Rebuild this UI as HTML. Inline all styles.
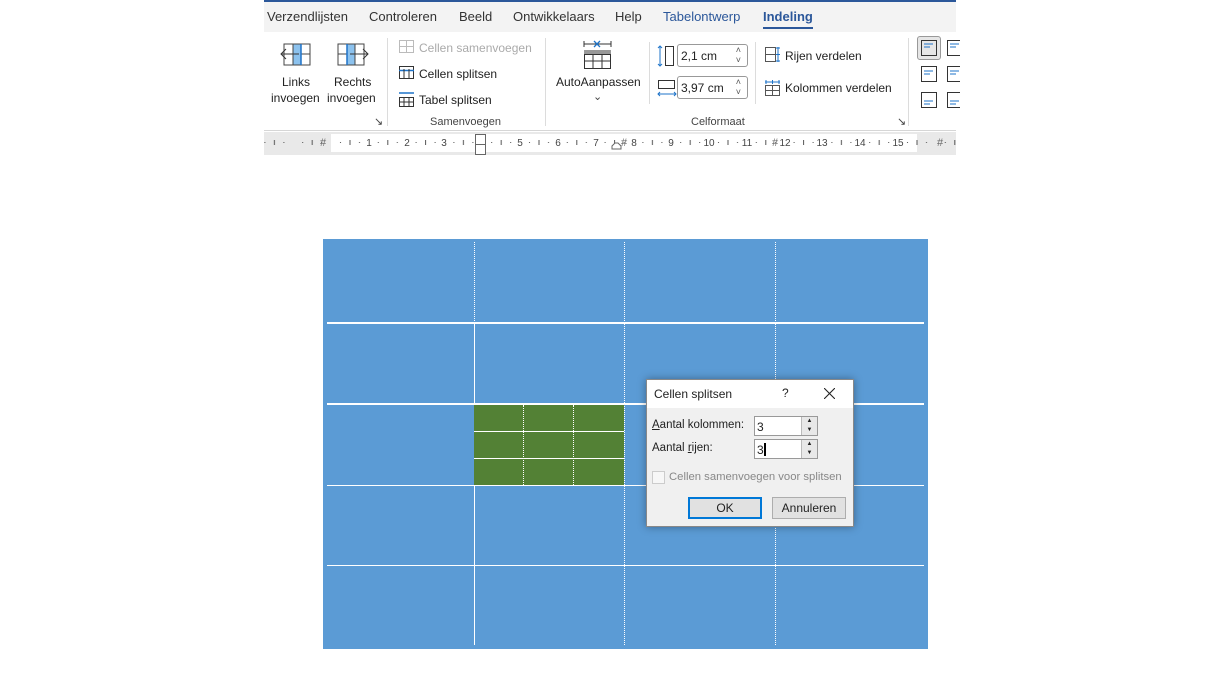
<!DOCTYPE html>
<html><head><meta charset="utf-8"><style>
*{margin:0;padding:0;box-sizing:border-box}
body{width:1220px;height:686px;background:#fff;position:relative;overflow:hidden;font-family:"Liberation Sans",sans-serif;color:#222}
.a{position:absolute;white-space:nowrap}
.t{font-size:13px;top:9px;color:#333}
.r{font-size:12px;color:#222}
.g{font-size:11px;color:#444}
.sep{position:absolute;width:1px;background:#dcdcdc}
.hl{position:absolute;background:#fff}
.vd{position:absolute;width:0;border-left:1px dotted #fff}
</style></head><body>
<!-- tab bar -->
<div class="a" style="left:264px;top:0;width:692px;height:2px;background:#2b579a"></div>
<div class="a" style="left:264px;top:2px;width:692px;height:30px;background:#f3f3f3"></div>
<div class="a t" style="left:267px">Verzendlijsten</div>
<div class="a t" style="left:369px">Controleren</div>
<div class="a t" style="left:459px">Beeld</div>
<div class="a t" style="left:513px">Ontwikkelaars</div>
<div class="a t" style="left:615px">Help</div>
<div class="a t" style="left:663px;color:#2b579a">Tabelontwerp</div>
<div class="a t" style="left:763px;color:#2b579a;font-weight:bold">Indeling</div>
<div class="a" style="left:763px;top:27px;width:50px;height:2px;background:#2b579a"></div>
<!-- ribbon -->
<div class="a" style="left:264px;top:32px;width:692px;height:99px;background:#fff;border-bottom:1px solid #d6d6d6"></div>
<svg class="a" style="left:280px;top:43px" width="32" height="24"><rect x="4" y="1" width="26" height="21" fill="#fff" stroke="#444"/><rect x="13" y="1" width="8" height="21" fill="#8cc2ee" stroke="#444"/><line x1="21" y1="11" x2="30" y2="11" stroke="#444"/><line x1="1" y1="11" x2="19" y2="11" stroke="#333"/><polyline points="6,6 1,11 6,16" fill="none" stroke="#333"/><line x1="21" y1="1" x2="21" y2="22" stroke="#1e73c8" stroke-width="1.5"/></svg>
<svg class="a" style="left:337px;top:43px" width="32" height="24"><rect x="1" y="1" width="26" height="21" fill="#fff" stroke="#444"/><rect x="10" y="1" width="8" height="21" fill="#8cc2ee" stroke="#444"/><line x1="1" y1="11" x2="10" y2="11" stroke="#444"/><line x1="13" y1="11" x2="31" y2="11" stroke="#333"/><polyline points="26,6 31,11 26,16" fill="none" stroke="#333"/><line x1="10" y1="1" x2="10" y2="22" stroke="#1e73c8" stroke-width="1.5"/></svg>
<div class="a r" style="left:282px;top:75px">Links</div>
<div class="a r" style="left:271px;top:91px">invoegen</div>
<div class="a r" style="left:334px;top:75px">Rechts</div>
<div class="a r" style="left:327px;top:91px">invoegen</div>
<div class="a g" style="left:374px;top:115px">↘</div>
<div class="sep" style="left:387px;top:38px;height:88px"></div>
<svg class="a" style="left:399px;top:40px" width="16" height="14"><rect x=".5" y=".5" width="14" height="12" fill="none" stroke="#bbb"/><line x1="0" y1="6.5" x2="15" y2="6.5" stroke="#bbb"/><line x1="7.5" y1="0" x2="7.5" y2="13" stroke="#bbb"/></svg>
<div class="a r" style="left:419px;top:41px;color:#aaa">Cellen samenvoegen</div>
<svg class="a" style="left:399px;top:66px" width="16" height="14"><rect x=".5" y=".5" width="14" height="12" fill="none" stroke="#333"/><line x1="0" y1="4.5" x2="15" y2="4.5" stroke="#1e73c8" stroke-width="1.5"/><line x1="5" y1="3" x2="5" y2="13" stroke="#333"/><line x1="10" y1="3" x2="10" y2="13" stroke="#333"/></svg>
<div class="a r" style="left:419px;top:67px">Cellen splitsen</div>
<svg class="a" style="left:399px;top:92px" width="16" height="15"><line x1="0" y1="1" x2="15" y2="1" stroke="#1e73c8" stroke-width="1.5"/><rect x=".5" y="5.5" width="14" height="9" fill="none" stroke="#333"/><line x1="0" y1="10" x2="15" y2="10" stroke="#333"/><line x1="5" y1="5" x2="5" y2="15" stroke="#333"/><line x1="10" y1="5" x2="10" y2="15" stroke="#333"/></svg>
<div class="a r" style="left:419px;top:93px">Tabel splitsen</div>
<div class="a g" style="left:430px;top:116px">Samenvoegen</div>
<div class="sep" style="left:545px;top:38px;height:88px"></div>
<svg class="a" style="left:583px;top:40px" width="30" height="30"><line x1="1" y1="4" x2="28" y2="4" stroke="#333"/><line x1="1" y1="1" x2="1" y2="7" stroke="#333"/><line x1="28" y1="1" x2="28" y2="7" stroke="#333"/><path d="M11 1l6 6M17 1l-6 6" stroke="#1e73c8" stroke-width="1.3"/><rect x="1" y="10" width="27" height="4" fill="#999"/><rect x="1.5" y="14.5" width="26" height="14" fill="none" stroke="#333"/><line x1="1" y1="21" x2="28" y2="21" stroke="#333"/><line x1="10" y1="14" x2="10" y2="29" stroke="#333"/><line x1="19" y1="14" x2="19" y2="29" stroke="#333"/></svg>
<div class="a r" style="left:556px;top:75px">AutoAanpassen</div>
<div class="a g" style="left:593px;top:90px">⌄</div>
<div class="sep" style="left:649px;top:42px;height:62px"></div>
<svg class="a" style="left:657px;top:45px" width="18" height="22"><path d="M3 1v20M1 3l2-2 2 2M1 19l2 2 2-2" stroke="#1e73c8" fill="none"/><rect x="8.5" y="1.5" width="8" height="19" fill="none" stroke="#333"/></svg>
<div class="a" style="left:677px;top:44px;width:71px;height:23px;border:1px solid #999;border-radius:3px;font-size:12px;padding:4px 0 0 3px">2,1 cm<span style="position:absolute;right:6px;top:0;font-size:9px;line-height:10px;color:#555">˄<br>˅</span></div>
<svg class="a" style="left:657px;top:79px" width="20" height="18"><rect x="1.5" y="1.5" width="16" height="8" fill="none" stroke="#333"/><path d="M1 15h18M3 13l-2 2 2 2M17 13l2 2-2 2" stroke="#1e73c8" fill="none"/></svg>
<div class="a" style="left:677px;top:76px;width:71px;height:23px;border:1px solid #999;border-radius:3px;font-size:12px;padding:4px 0 0 3px">3,97 cm<span style="position:absolute;right:6px;top:0;font-size:9px;line-height:10px;color:#555">˄<br>˅</span></div>
<div class="sep" style="left:755px;top:42px;height:62px"></div>
<svg class="a" style="left:765px;top:47px" width="16" height="16"><rect x=".5" y=".5" width="10" height="14" fill="none" stroke="#555"/><line x1="0" y1="7.5" x2="10" y2="7.5" stroke="#555"/><path d="M13 0v15M11 1h4M11 14h4M11 7.5h4" stroke="#1e73c8"/></svg>
<div class="a r" style="left:785px;top:49px">Rijen verdelen</div>
<svg class="a" style="left:765px;top:80px" width="16" height="16"><path d="M0 2h15M1 0v4M7.5 0v4M14 0v4" stroke="#1e73c8"/><rect x=".5" y="5.5" width="14" height="10" fill="none" stroke="#555"/><line x1="7.5" y1="5" x2="7.5" y2="16" stroke="#555"/><line x1="0" y1="10.5" x2="15" y2="10.5" stroke="#555"/></svg>
<div class="a r" style="left:785px;top:81px">Kolommen verdelen</div>
<div class="a g" style="left:897px;top:115px">↘</div>
<div class="a g" style="left:691px;top:116px">Celformaat</div>
<div class="sep" style="left:908px;top:38px;height:88px"></div>
<div class="a" style="left:917px;top:36px;width:24px;height:24px;border:1px solid #999;border-radius:3px;background:#e6e6e6"></div>
<svg class="a" style="left:920px;top:39px" width="40" height="72"><g fill="none" stroke="#333"><rect x="1.5" y="1.5" width="15" height="15"/><rect x="1.5" y="27.5" width="15" height="15"/><rect x="1.5" y="53.5" width="15" height="15"/><rect x="27.5" y="1.5" width="15" height="15"/><rect x="27.5" y="27.5" width="15" height="15"/><rect x="27.5" y="53.5" width="15" height="15"/></g><g stroke="#1e73c8"><path d="M4 5h9M4 8h6M4 32h9M4 35h6M4 62h9M4 65h6M30 5h9M30 8h6M30 32h9M30 35h6M30 62h9M30 65h6"/></g></svg>
<!-- ruler -->
<svg class="a" style="left:264px;top:132px" width="692" height="23" viewBox="264 132 692 23" font-family="Liberation Sans, sans-serif" font-size="10" fill="#444">
<defs><pattern id="rp" x="331" y="132" width="37.8" height="23" patternUnits="userSpaceOnUse"><rect x="9" y="10" width="1" height="1" fill="#555"/><rect x="28" y="10" width="1" height="1" fill="#555"/><rect x="18.5" y="8" width="1" height="5" fill="#555"/></pattern></defs>
<rect x="264" y="132" width="692" height="23" fill="#e9e9e9"/>
<rect x="331" y="134" width="586" height="18" fill="#fff"/>
<rect x="264" y="132" width="692" height="23" fill="url(#rp)"/>
<g text-anchor="middle">
<text x="369" y="146">1</text><text x="407" y="146">2</text><text x="444" y="146">3</text><text x="520" y="146">5</text><text x="558" y="146">6</text><text x="596" y="146">7</text><text x="634" y="146">8</text><text x="671" y="146">9</text><text x="709" y="146">10</text><text x="747" y="146">11</text><text x="785" y="146">12</text><text x="822" y="146">13</text><text x="860" y="146">14</text><text x="898" y="146">15</text>
</g>
<g text-anchor="middle" font-size="11" fill="#666"><text x="323" y="146">#</text><text x="624" y="146">#</text><text x="775" y="146">#</text><text x="940" y="146">#</text></g>
<rect x="475.5" y="134.5" width="10" height="20" fill="#fff" stroke="#666"/><line x1="475" y1="144.5" x2="486" y2="144.5" stroke="#666"/>
<path d="M612 149h9v-3l-3-3-3 0-3 3z" fill="#fff" stroke="#666"/>
</svg>
<!-- table -->
<div class="a" style="left:323px;top:239px;width:605px;height:410px;background:#5b9bd5"></div>
<div class="hl" style="left:327px;top:322px;width:597px;height:2px"></div>
<div class="hl" style="left:327px;top:403px;width:597px;height:2px"></div>
<div class="hl" style="left:327px;top:485px;width:597px;height:1px"></div>
<div class="hl" style="left:327px;top:565px;width:597px;height:1px"></div>
<div class="vd" style="left:474px;top:242px;height:81px"></div>
<div class="hl" style="left:474px;top:323px;width:1px;height:322px"></div>
<div class="vd" style="left:624px;top:242px;height:403px"></div>
<div class="vd" style="left:775px;top:242px;height:403px"></div>
<div class="a" style="left:474px;top:405px;width:150px;height:80px;background:#538135"></div>
<div class="hl" style="left:474px;top:431px;width:150px;height:1px"></div>
<div class="hl" style="left:474px;top:458px;width:150px;height:1px"></div>
<div class="vd" style="left:523px;top:405px;height:80px"></div>
<div class="vd" style="left:573px;top:405px;height:80px"></div>
<!-- dialog -->
<div class="a" style="left:646px;top:379px;width:208px;height:148px;background:#f0f0f0;border:1px solid #888;box-shadow:0 0 8px rgba(0,0,0,.35)"></div>
<div class="a" style="left:647px;top:380px;width:206px;height:28px;background:#fff"></div>
<div class="a r" style="left:654px;top:387px">Cellen splitsen</div>
<div class="a r" style="left:782px;top:386px">?</div>
<svg class="a" style="left:824px;top:388px" width="11" height="11"><path d="M0 0l11 11M11 0L0 11" stroke="#222" stroke-width="1.1"/></svg>
<div class="a" style="left:652px;top:419px;font-size:11.5px"><u>A</u>antal kolommen:</div>
<div class="a" style="left:652px;top:442px;font-size:11.5px">Aantal <u>r</u>ijen:</div>
<div class="a" style="left:754px;top:416px;width:64px;height:20px;border:1px solid #999;background:#fff;font-size:12px;padding:3px 0 0 2px">3</div>
<div class="a" style="left:754px;top:439px;width:64px;height:20px;border:1px solid #999;background:#fff;font-size:12px;padding:3px 0 0 2px">3<span style="display:inline-block;width:2px;height:13px;background:#000;vertical-align:-2px"></span></div>
<div class="a" style="left:801px;top:417px;width:16px;height:18px;border-left:1px solid #bbb;background:#e8e8e8;font-size:6px;line-height:9px;text-align:center">▲<br>▼</div>
<div class="a" style="left:801px;top:440px;width:16px;height:18px;border-left:1px solid #bbb;background:#e8e8e8;font-size:6px;line-height:9px;text-align:center">▲<br>▼</div>
<div class="a" style="left:652px;top:471px;width:13px;height:13px;border:1px solid #ccc;background:#f7f7f7"></div>
<div class="a" style="left:669px;top:471px;font-size:11.3px;color:#888">Cellen samenvoegen voor splitsen</div>
<div class="a" style="left:688px;top:497px;width:74px;height:22px;border:2px solid #0078d7;background:#e1e1e1;font-size:12px;text-align:center;line-height:18px">OK</div>
<div class="a" style="left:772px;top:497px;width:74px;height:22px;border:1px solid #adadad;background:#e1e1e1;font-size:12px;text-align:center;line-height:20px">Annuleren</div>
</body></html>
